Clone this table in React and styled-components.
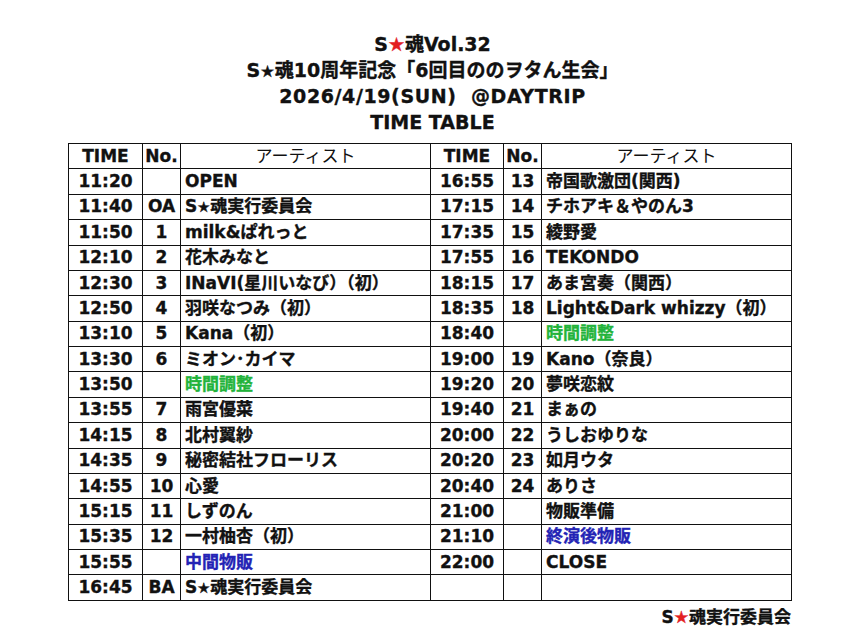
import React from "react";
import styled, { createGlobalStyle } from "styled-components";

const GlobalStyle = createGlobalStyle`
  body {
    margin: 0;
    background: #ffffff;
    font-family: "DejaVu Sans", "Noto Sans CJK JP", sans-serif;
    font-weight: bold;
    color: #111111;
    -webkit-text-stroke: 0.35px currentColor;
  }
`;

const Page = styled.div`
  width: 861px;
  height: 643px;
  padding-top: 31px;
  box-sizing: border-box;
`;

const Heading = styled.div`
  display: flex;
  flex-direction: column;
  align-items: center;
  margin-left: 4px;
`;

const TitleLine = styled.div`
  height: 26px;
  line-height: 26px;
  font-size: 19px;
  white-space: pre;
  text-align: center;
  letter-spacing: ${(p) => p.$spread || "0"};
`;

const Star = styled.span`
  color: ${(p) => (p.$red ? "#e3201f" : "inherit")};
  font-size: ${(p) => (p.$red ? "1em" : "0.85em")};
`;

const Frame = styled.div`
  width: 723px;
  margin: 8px 0 0 68px;
`;

const Table = styled.table`
  width: 723px;
  height: 458px;
  border-collapse: collapse;
  table-layout: fixed;
  font-size: 17px;
`;

const Row = styled.tr`
  height: 24px;
`;

const Cell = styled.td`
  border: 1px solid #111;
  padding: 0;
  padding-left: ${(p) => (p.$left ? "4px" : "0")};
  text-align: ${(p) => (p.$left ? "left" : "center")};
  white-space: nowrap;
  overflow: hidden;
  line-height: 1;
  color: ${(p) =>
    p.$tone === "green" ? "#22b33a" : p.$tone === "blue" ? "#2323b5" : "#111"};
`;

const HeadCell = styled(Cell)`
  font-weight: ${(p) => (p.$light ? "normal" : "bold")};
  -webkit-text-stroke: ${(p) => (p.$light ? "0" : "0.35px")} currentColor;
`;

const Footer = styled.div`
  width: 723px;
  margin: 5px 0 0 68px;
  text-align: right;
  font-size: 17px;
  line-height: 22px;
`;

const left = [
  ["11:20", "", "OPEN"],
  ["11:40", "OA", "S★魂実行委員会"],
  ["11:50", "1", "milk&ぱれっと"],
  ["12:10", "2", "花木みなと"],
  ["12:30", "3", "INaVI(星川いなび）（初）"],
  ["12:50", "4", "羽咲なつみ（初）"],
  ["13:10", "5", "Kana（初）"],
  ["13:30", "6", "ミオン･カイマ"],
  ["13:50", "", "時間調整", "green"],
  ["13:55", "7", "雨宮優菜"],
  ["14:15", "8", "北村翼紗"],
  ["14:35", "9", "秘密結社フローリス"],
  ["14:55", "10", "心愛"],
  ["15:15", "11", "しずのん"],
  ["15:35", "12", "一村柚杏（初）"],
  ["15:55", "", "中間物販", "blue"],
  ["16:45", "BA", "S★魂実行委員会"],
];

const right = [
  ["16:55", "13", "帝国歌激団(関西)"],
  ["17:15", "14", "チホアキ＆やのん3"],
  ["17:35", "15", "綾野愛"],
  ["17:55", "16", "TEKONDO"],
  ["18:15", "17", "あま宮奏（関西）"],
  ["18:35", "18", "Light&Dark whizzy（初）"],
  ["18:40", "", "時間調整", "green"],
  ["19:00", "19", "Kano（奈良）"],
  ["19:20", "20", "夢咲恋紋"],
  ["19:40", "21", "まぁの"],
  ["20:00", "22", "うしおゆりな"],
  ["20:20", "23", "如月ウタ"],
  ["20:40", "24", "ありさ"],
  ["21:00", "", "物販準備"],
  ["21:10", "", "終演後物販", "blue"],
  ["22:00", "", "CLOSE"],
  ["", "", ""],
];

const Artist = ({ name }) => {
  const parts = name.split("★");
  if (parts.length < 2) return name;
  return (
    <>
      {parts[0]}
      <Star>★</Star>
      {parts[1]}
    </>
  );
};

const Slot = ({ item }) => (
  <>
    <Cell>{item[0]}</Cell>
    <Cell>{item[1]}</Cell>
    <Cell $left $tone={item[3]}>
      <Artist name={item[2]} />
    </Cell>
  </>
);

const App = () => {
  return (
    <Page>
      <GlobalStyle />
      <Heading>
        <TitleLine>
          S<Star $red>★</Star>魂Vol.32
        </TitleLine>
        <TitleLine>
          S<Star>★</Star>魂10周年記念「6回目ののヲタん生会」
        </TitleLine>
        <TitleLine $spread="0.6px">2026/4/19(SUN)  @DAYTRIP</TitleLine>
        <TitleLine>TIME TABLE</TitleLine>
      </Heading>

      <Frame>
        <Table>
          <colgroup>
            <col style={{ width: 74 }} />
            <col style={{ width: 38 }} />
            <col style={{ width: 250 }} />
            <col style={{ width: 73 }} />
            <col style={{ width: 38 }} />
            <col style={{ width: 250 }} />
          </colgroup>
          <tbody>
            <Row>
              <HeadCell>TIME</HeadCell>
              <HeadCell>No.</HeadCell>
              <HeadCell $light>アーティスト</HeadCell>
              <HeadCell>TIME</HeadCell>
              <HeadCell>No.</HeadCell>
              <HeadCell $light>アーティスト</HeadCell>
            </Row>
            {left.map((item, i) => (
              <Row key={i}>
                <Slot item={item} />
                <Slot item={right[i]} />
              </Row>
            ))}
          </tbody>
        </Table>
      </Frame>

      <Footer>
        S<Star $red>★</Star>魂実行委員会
      </Footer>
    </Page>
  );
};

export default App;
